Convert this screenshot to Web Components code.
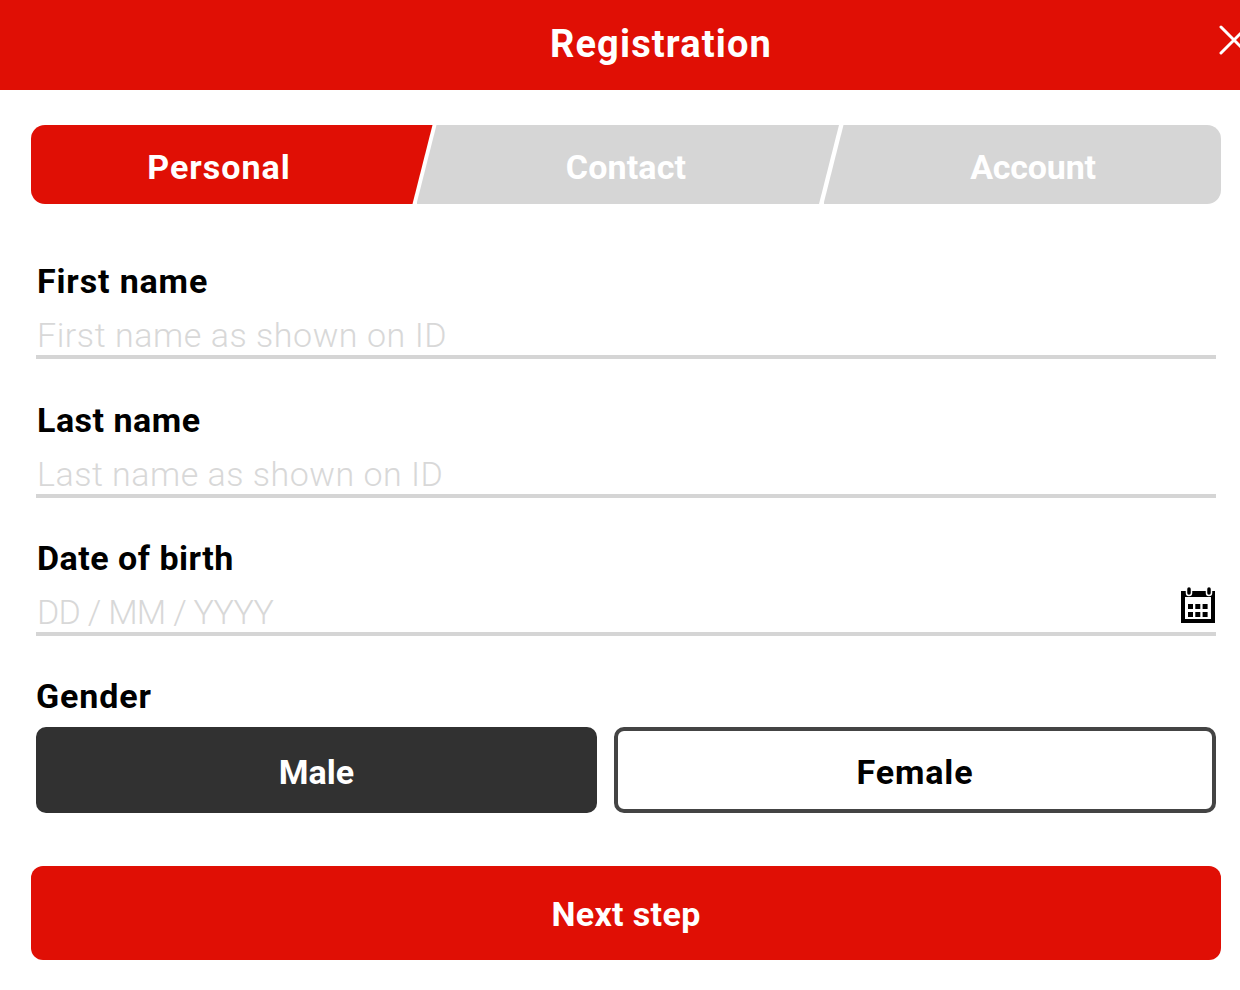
<!DOCTYPE html>
<html lang="en"><head><meta charset="utf-8"><title>Registration</title>
<style>
html,body{margin:0;padding:0;background:#fff;height:990px;overflow:hidden}
body{font-family:Roboto,"Liberation Sans",sans-serif;color:#000}
</style></head><body>
<reg-app>
<reg-header>Registration</reg-header>
<reg-stepper>
<reg-step kind="first" active style="--ls:1px">Personal</reg-step>
<reg-step kind="mid" style="--ls:.15px">Contact</reg-step>
<reg-step kind="last" style="--ls:-.2px">Account</reg-step>
</reg-stepper>
<reg-form>
<reg-field label="First name" placeholder="First name as shown on ID" style="--lls:.85px;--pls:.55px"></reg-field>
<reg-field label="Last name" placeholder="Last name as shown on ID" style="--lls:.5px;--pls:.5px"></reg-field>
<reg-field label="Date of birth" placeholder="DD / MM / YYYY" calendar style="--lls:.5px;--pls:-.7px"></reg-field>
<reg-gender></reg-gender>
</reg-form>
<reg-next>Next step</reg-next>
</reg-app>
<script>
function def(name,html,init){
  customElements.define(name,class extends HTMLElement{
    constructor(){super();this.attachShadow({mode:'open'}).innerHTML=html;}
    connectedCallback(){if(init)init(this);}
  });
}
def('reg-app',`<style>:host{display:block;height:990px}</style><slot></slot>`);
def('reg-header',`<style>
:host{display:flex;align-items:center;justify-content:center;position:relative;height:90px;background:#e00f05;color:#fff;padding:0 0 2px 82px;box-sizing:border-box;font:700 38px/1 Roboto,sans-serif;letter-spacing:1.15px}
svg{position:absolute;left:1219px;top:25px;width:30px;height:30px}
</style><slot></slot><svg viewBox="0 0 30 30" fill="none" stroke="#fff" stroke-width="3" stroke-linecap="round"><path d="M2 2 28 28M28 2 2 28"/></svg>`);
def('reg-stepper',`<style>
:host{display:grid;grid-template-columns:repeat(3,1fr);gap:31px;height:79px;margin:35px 19px 0 31px;border-radius:14px;overflow:hidden}
</style><slot></slot>`);
def('reg-step',`<style>
:host{display:flex;align-items:center;justify-content:center;position:relative;color:#fff;padding-top:4px;box-sizing:border-box;font:700 34px/1 Roboto,sans-serif;letter-spacing:var(--ls,0);z-index:0}
:host::before{content:"";position:absolute;top:0;bottom:0;z-index:-1;background:#d6d6d6}
:host([active])::before{background:#e00f05}
:host([kind=first])::before{left:0;right:-25.5px;clip-path:polygon(0 0,100% 0,calc(100% - 20px) 100%,0 100%)}
:host([kind=mid])::before{left:-21.5px;right:-25px;clip-path:polygon(20px 0,100% 0,calc(100% - 20px) 100%,0 100%)}
:host([kind=last])::before{left:-21.5px;right:0;clip-path:polygon(20px 0,100% 0,100% 100%,0 100%)}
</style><slot></slot>`);
def('reg-form',`<style>:host{display:flex;flex-direction:column;margin:55.3px 24px 0 36px}</style><slot></slot>`);
def('reg-field',`<style>
:host{display:block;height:138.4px;box-sizing:border-box}
.l{font:700 34px/44px Roboto,sans-serif;letter-spacing:var(--lls,0);color:#000;padding-left:1px}
.r{display:flex;align-items:flex-end;justify-content:space-between;height:41px;margin-top:11px;border-bottom:4px solid #d5d5d5;box-sizing:content-box}
.p{align-self:flex-start;font:300 34px/42px Roboto,sans-serif;letter-spacing:var(--pls,0);color:#d8d8d8;padding-left:1px}
svg{display:block;flex:none;width:36px;height:36px;margin-bottom:9px}
</style><div class="l"></div><div class="r"><span class="p"></span></div>`,el=>{
  const s=el.shadowRoot;
  s.querySelector('.l').textContent=el.getAttribute('label');
  s.querySelector('.p').textContent=el.getAttribute('placeholder');
  if(el.hasAttribute('calendar')&&!s.querySelector('svg')){
    s.querySelector('.r').insertAdjacentHTML('beforeend',`<svg viewBox="0 0 36 36"><path fill-rule="evenodd" d="M1 4h34v32H1zM5 10v22h26V10z"/><rect x="6.500" y="-.5" width="5" height="9" rx="2.500" fill="#000" stroke="#fff" stroke-width="1.500"/><rect x="26.500" y="-.5" width="5" height="9" rx="2.500" fill="#000" stroke="#fff" stroke-width="1.500"/><path d="M8 17h5v5H8zM15.300 17h5v5h-5zM22.600 17h5v5h-5zM8 25h5v5H8zM15.300 25h5v5h-5zM22.600 25h5v5h-5z"/></svg>`);
  }
});
def('reg-gender',`<style>
:host{display:block}
.l{font:700 34px/44px Roboto,sans-serif;letter-spacing:.9px}
.b{display:flex;gap:17px;margin-top:8.5px}
.o{display:flex;align-items:center;justify-content:center;height:86px;padding-top:4px;box-sizing:border-box;border-radius:10px;font:700 34px/1 Roboto,sans-serif}
.m{width:561px;background:#313131;color:#fff}
.f{width:602px;background:#fff;color:#000;border:4px solid #444;letter-spacing:.9px}
</style><div class="l">Gender</div><div class="b"><div class="o m">Male</div><div class="o f">Female</div></div>`);
def('reg-next',`<style>
:host{display:flex;align-items:center;justify-content:center;height:94px;margin:53px 19px 0 31px;padding-top:3px;box-sizing:border-box;background:#e00f05;color:#fff;border-radius:12px;font:700 34px/1 Roboto,sans-serif;letter-spacing:.35px}
</style><slot></slot>`);
</script>
</body></html>
